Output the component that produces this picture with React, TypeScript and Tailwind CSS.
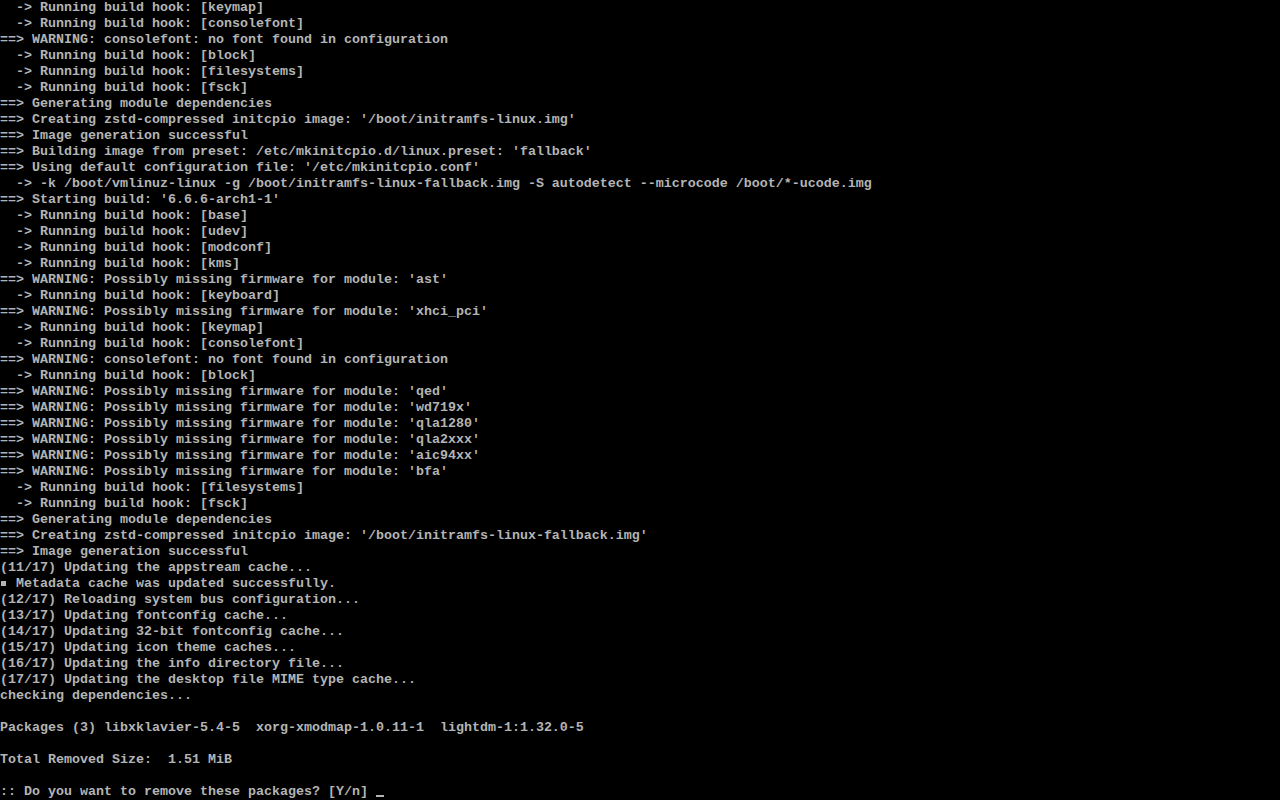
import React from "react";

const lines: string[] = [
  "  -> Running build hook: [keymap]",
  "  -> Running build hook: [consolefont]",
  "==> WARNING: consolefont: no font found in configuration",
  "  -> Running build hook: [block]",
  "  -> Running build hook: [filesystems]",
  "  -> Running build hook: [fsck]",
  "==> Generating module dependencies",
  "==> Creating zstd-compressed initcpio image: '/boot/initramfs-linux.img'",
  "==> Image generation successful",
  "==> Building image from preset: /etc/mkinitcpio.d/linux.preset: 'fallback'",
  "==> Using default configuration file: '/etc/mkinitcpio.conf'",
  "  -> -k /boot/vmlinuz-linux -g /boot/initramfs-linux-fallback.img -S autodetect --microcode /boot/*-ucode.img",
  "==> Starting build: '6.6.6-arch1-1'",
  "  -> Running build hook: [base]",
  "  -> Running build hook: [udev]",
  "  -> Running build hook: [modconf]",
  "  -> Running build hook: [kms]",
  "==> WARNING: Possibly missing firmware for module: 'ast'",
  "  -> Running build hook: [keyboard]",
  "==> WARNING: Possibly missing firmware for module: 'xhci_pci'",
  "  -> Running build hook: [keymap]",
  "  -> Running build hook: [consolefont]",
  "==> WARNING: consolefont: no font found in configuration",
  "  -> Running build hook: [block]",
  "==> WARNING: Possibly missing firmware for module: 'qed'",
  "==> WARNING: Possibly missing firmware for module: 'wd719x'",
  "==> WARNING: Possibly missing firmware for module: 'qla1280'",
  "==> WARNING: Possibly missing firmware for module: 'qla2xxx'",
  "==> WARNING: Possibly missing firmware for module: 'aic94xx'",
  "==> WARNING: Possibly missing firmware for module: 'bfa'",
  "  -> Running build hook: [filesystems]",
  "  -> Running build hook: [fsck]",
  "==> Generating module dependencies",
  "==> Creating zstd-compressed initcpio image: '/boot/initramfs-linux-fallback.img'",
  "==> Image generation successful",
  "(11/17) Updating the appstream cache...",
];

const after: string[] = [
  "(12/17) Reloading system bus configuration...",
  "(13/17) Updating fontconfig cache...",
  "(14/17) Updating 32-bit fontconfig cache...",
  "(15/17) Updating icon theme caches...",
  "(16/17) Updating the info directory file...",
  "(17/17) Updating the desktop file MIME type cache...",
  "checking dependencies...",
  "",
  "Packages (3) libxklavier-5.4-5  xorg-xmodmap-1.0.11-1  lightdm-1:1.32.0-5",
  "",
  "Total Removed Size:  1.51 MiB",
  "",
];

function Line({ text }: { text: string }) {
  return <div className="h-4 whitespace-pre">{text}</div>;
}

export default function App() {
  return (
    <div className="w-[1280px] h-[800px] bg-black overflow-hidden text-[#b4b4b4] font-['Liberation_Mono',monospace] text-[13.33px] leading-4 font-bold">
      {lines.map((l, i) => (
        <Line key={i} text={l} />
      ))}
      {/* appstream prints a box glyph before this message */}
      <div className="h-4 whitespace-pre flex">
        <span className="w-2 h-4 pl-px pt-[5px]">
          <span className="block w-[5px] h-[5px] bg-[#b4b4b4]" />
        </span>
        <span>{" Metadata cache was updated successfully."}</span>
      </div>
      {after.map((l, i) => (
        <Line key={i} text={l} />
      ))}
      <div className="h-4 whitespace-pre flex">
        <span>{":: Do you want to remove these packages? [Y/n] "}</span>
        <span className="w-2 h-4 flex flex-col justify-end pb-[3px]">
          <span className="block h-[2px] w-2 bg-[#b4b4b4]" />
        </span>
      </div>
    </div>
  );
}
